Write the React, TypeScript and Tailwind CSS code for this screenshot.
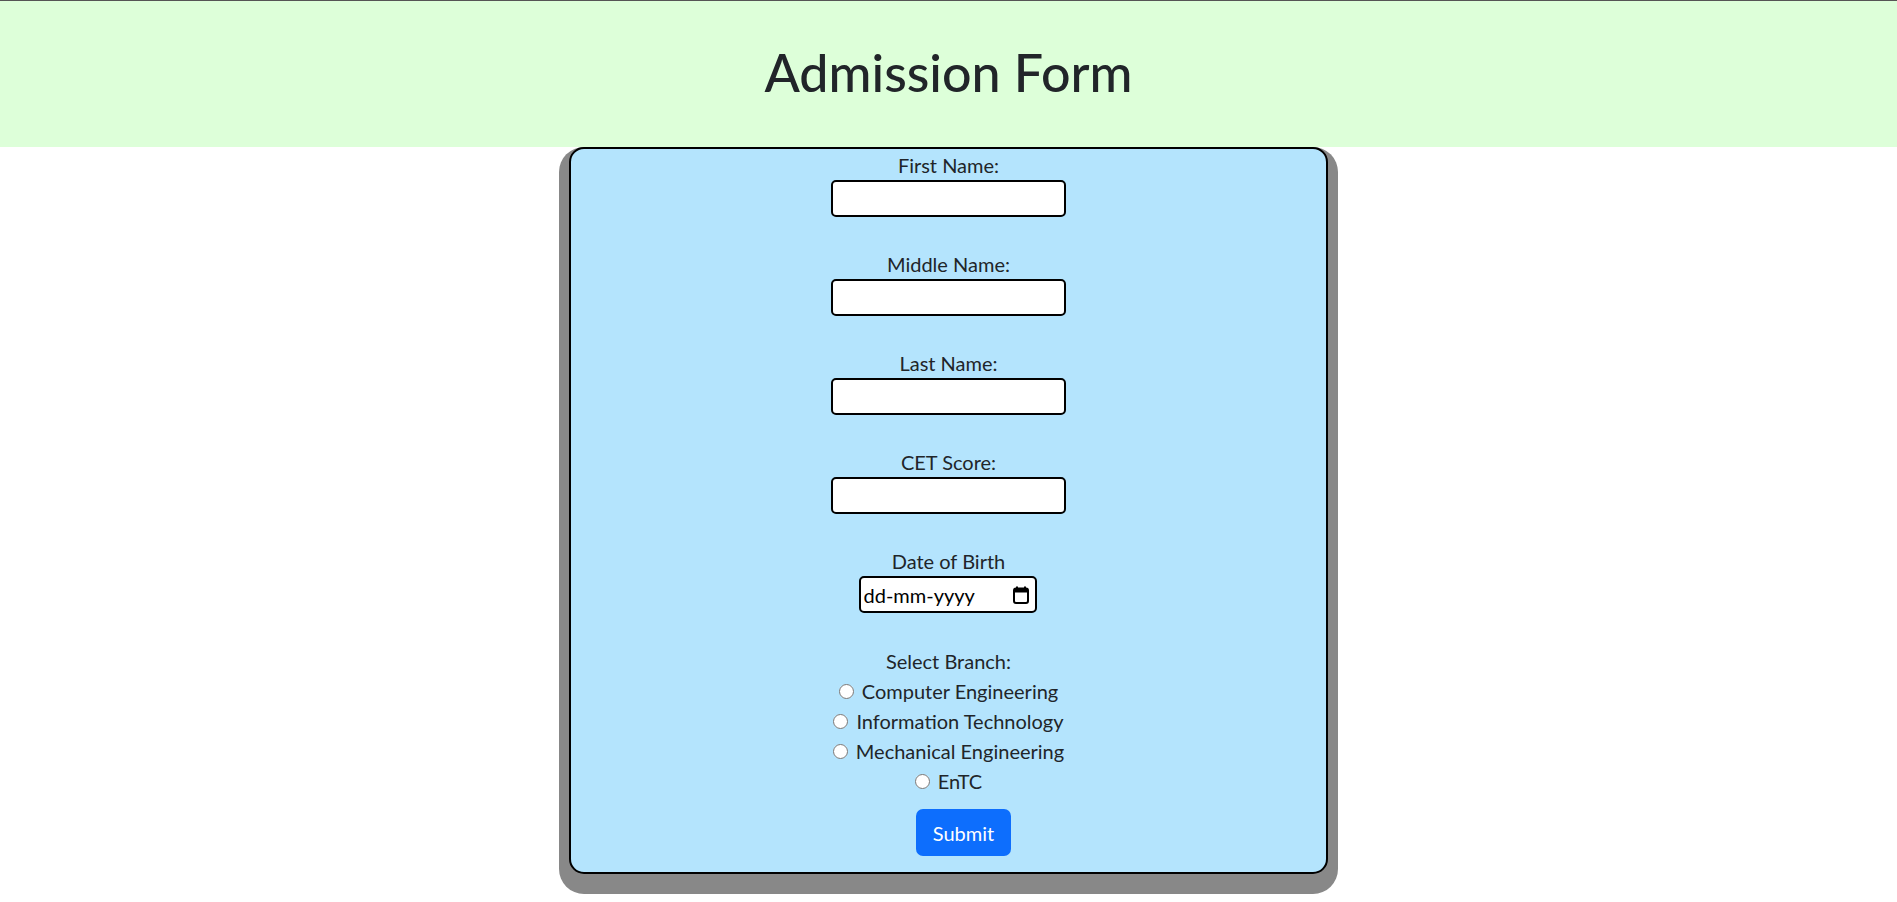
import { useState } from "react";

const fields = ["First Name:", "Middle Name:", "Last Name:", "CET Score:"];
const branches = [
  "Computer Engineering",
  "Information Technology",
  "Mechanical Engineering",
  "EnTC",
];

function CalendarIcon() {
  return (
    <svg width="16" height="18" viewBox="0 0 16 18" aria-hidden="true">
      <rect x="3" y="0.5" width="2" height="3" fill="#000" />
      <rect x="11" y="0.5" width="2" height="3" fill="#000" />
      <rect x="1" y="2.5" width="14" height="14.5" rx="2" fill="none" stroke="#000" strokeWidth="2" />
      <rect x="1" y="2.5" width="14" height="4" fill="#000" />
    </svg>
  );
}

export default function App() {
  const [branch, setBranch] = useState("");

  return (
    <div className="min-h-screen bg-white font-['Lato',sans-serif] text-[20px] text-[#212529]">
      <header className="flex h-[147px] items-center justify-center border-t border-[#555] bg-[#ddffd9] pb-[3px]">
        <h1 className="text-[52px] font-medium leading-[1.2]">Admission Form</h1>
      </header>

      <form
        className="mx-auto flex w-[40%] flex-col items-center rounded-[15px] border-2 border-black bg-[#b4e4fd] pt-[1px] pb-[16px] shadow-[0_10px_0_10px_#888]"
        onSubmit={(e) => e.preventDefault()}
      >
        {fields.map((label) => (
          <div key={label} className="mb-[32px] flex flex-col items-center">
            <label className="h-[30px] leading-[30px]">{label}</label>
            <input
              type="text"
              className="h-[37px] w-[235px] rounded-[5px] border-2 border-black bg-white px-1 outline-none"
            />
          </div>
        ))}

        <div className="mb-[33px] flex flex-col items-center">
          <label className="h-[30px] leading-[30px]">Date of Birth</label>
          <div className="flex h-[37px] w-[178px] items-center justify-between rounded-[5px] border-2 border-black bg-white pl-[2px] pr-[6px] text-black">
            <span>dd-mm-yyyy</span>
            <CalendarIcon />
          </div>
        </div>

        <p className="h-[30px] leading-[30px]">Select Branch:</p>
        {branches.map((b) => (
          <label key={b} className="flex h-[30px] items-center gap-[8px] leading-[30px]">
            <input
              type="radio"
              name="branch"
              checked={branch === b}
              onChange={() => setBranch(b)}
              className="h-[15px] w-[15px]"
            />
            {b}
          </label>
        ))}

        <button
          type="submit"
          className="mt-[13px] ml-[30px] h-[47px] w-[95px] rounded-[7px] bg-[#0d6efd] text-white"
        >
          Submit
        </button>
      </form>
    </div>
  );
}
